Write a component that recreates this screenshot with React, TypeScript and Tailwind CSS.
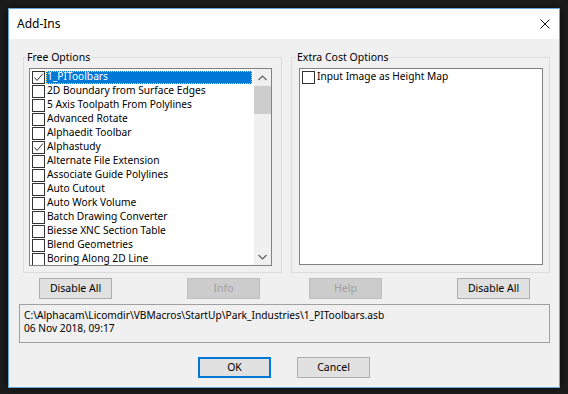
import React from 'react';

const freeOptions = [
  { name: '1_PIToolbars', checked: true, selected: true },
  { name: '2D Boundary from Surface Edges' },
  { name: '5 Axis Toolpath From Polylines' },
  { name: 'Advanced Rotate' },
  { name: 'Alphaedit Toolbar' },
  { name: 'Alphastudy', checked: true },
  { name: 'Alternate File Extension' },
  { name: 'Associate Guide Polylines' },
  { name: 'Auto Cutout' },
  { name: 'Auto Work Volume' },
  { name: 'Batch Drawing Converter' },
  { name: 'Biesse XNC Section Table' },
  { name: 'Blend Geometries' },
  { name: 'Boring Along 2D Line' },
];

type Option = { name: string; checked?: boolean; selected?: boolean };

const CheckBox = ({ checked }: { checked?: boolean }) => (
  <div className="w-[13px] h-[13px] shrink-0 border border-[#333333] bg-white">
    {checked && (
      <svg width="11" height="11" viewBox="0 0 11 11">
        <polyline points="1.5,5.5 4,8.5 10,1.5" fill="none" stroke="#333333" strokeWidth="1" />
      </svg>
    )}
  </div>
);

const OptionRow = ({ name, checked, selected }: Option) => (
  <div className="flex items-center h-[14px] pl-[2px] shrink-0">
    <CheckBox checked={checked} />
    <span
      className={
        selected
          ? 'ml-[1px] flex-1 h-[13px] flex items-center pl-[1px] bg-[#0078d7] text-white outline outline-1 outline-dotted outline-[#f5d76e] -outline-offset-1'
          : 'ml-[1px] pl-[1px] flex-1 h-[13px] flex items-center text-black'
      }
    >
      {name}
    </span>
  </div>
);

const Button = ({ label, disabled, primary, className = '' }: { label: string; disabled?: boolean; primary?: boolean; className?: string }) => (
  <button
    className={
      'h-[21px] w-[73px] shrink-0 text-[10.5px] leading-none ' +
      (disabled
        ? 'bg-[#cccccc] border border-[#bfbfbf] text-[#a0a0a0] '
        : primary
        ? 'bg-[#e1e1e1] border-2 border-[#0078d7] text-black '
        : 'bg-[#e1e1e1] border border-[#adadad] text-black ') +
      className
    }
  >
    {label}
  </button>
);

const App = () => {
  return (
    <div
      className="w-[568px] h-[394px] bg-[#1c1c1c] p-2 text-[10.2px]"
      style={{ fontFamily: '"Noto Sans", "Open Sans", sans-serif' }}
    >
      <div className="w-[552px] h-[380px] border border-[#6aa6db] flex flex-col shadow-[0_0_8px_rgba(0,0,0,0.6)]">
        {/* title bar */}
        <div className="h-[30px] bg-white flex items-center justify-between pl-[8px] pr-[9px]">
          <span className="text-[12px] text-black">Add-Ins</span>
          <svg width="10" height="10" viewBox="0 0 10 10">
            <path d="M0.5 0.5 L9.5 9.5 M9.5 0.5 L0.5 9.5" stroke="#111111" strokeWidth="1" />
          </svg>
        </div>

        <div className="flex-1 bg-[#f0f0f0] flex flex-col">
          <div className="flex gap-[9px] pl-[14px] pt-[11px]">
            <fieldset className="w-[259px] h-[223px] border border-[#dcdcdc] pl-[5px]">
              <legend className="-ml-[3px] px-[1px] leading-[14px] text-[10.5px]">Free Options</legend>
              <div className="mt-[4px] w-[243px] h-[198px] border border-[#828282] bg-white flex">
                <div className="flex-1 flex flex-col pt-[1px] overflow-hidden pr-[2px]">
                  {freeOptions.map((o) => (
                    <OptionRow key={o.name} {...o} />
                  ))}
                </div>
                <div className="w-[17px] bg-[#f0f0f0] flex flex-col items-center">
                  <div className="h-[17px] flex items-center justify-center">
                    <svg width="9" height="6" viewBox="0 0 9 6">
                      <polyline points="0.5,5 4.5,1 8.5,5" fill="none" stroke="#606060" strokeWidth="1.2" />
                    </svg>
                  </div>
                  <div className="w-[17px] h-[28px] bg-[#cdcdcd]" />
                  <div className="flex-1" />
                  <div className="h-[17px] flex items-center justify-center">
                    <svg width="9" height="6" viewBox="0 0 9 6">
                      <polyline points="0.5,1 4.5,5 8.5,1" fill="none" stroke="#606060" strokeWidth="1.2" />
                    </svg>
                  </div>
                </div>
              </div>
            </fieldset>

            <fieldset className="w-[259px] h-[223px] border border-[#dcdcdc] pl-[7px]">
              <legend className="-ml-[3px] px-[1px] leading-[14px] text-[10.5px]">Extra Cost Options</legend>
              <div className="mt-[4px] w-[244px] h-[197px] border border-[#828282] bg-white flex flex-col pt-[1px]">
                <OptionRow name="Input Image as Height Map" />
              </div>
            </fieldset>
          </div>

          <div className="flex pl-[30px] mt-[5px]">
            <Button label="Disable All" />
            <Button label="Info" disabled className="ml-[75px]" />
            <Button label="Help" disabled className="ml-[49px]" />
            <Button label="Disable All" className="ml-[75px]" />
          </div>

          <div className="ml-[10px] mt-[5px] w-[531px] h-[39px] border border-[#a0a0a0] px-[4px] pt-[4px] leading-[13px] text-black">
            <div>C:\Alphacam\Licomdir\VBMacros\StartUp\Park_Industries\1_PIToolbars.asb</div>
            <div>06 Nov 2018, 09:17</div>
          </div>

          <div className="flex ml-[189px] mt-[14px]">
            <Button label="OK" primary />
            <Button label="Cancel" className="ml-[26px]" />
          </div>
        </div>
      </div>
    </div>
  );
};

export default App;
